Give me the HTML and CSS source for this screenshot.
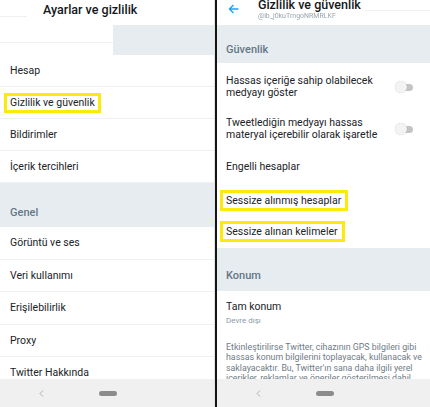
FILE: index.html
```html
<!DOCTYPE html>
<html lang="tr">
<head>
	<meta charset="UTF-8">
	<title>Ayarlar ve gizlilik</title>
	<link rel="stylesheet" href="styles.css">
</head>
<body>
	<div class="screen">
		<!-- sol ekran -->
		<section class="phone phone-left">
			<div class="content">
				<div class="top">
					<span class="ghost-line"></span>
					<h1 class="title">Ayarlar ve gizlilik</h1>
				</div>
				<div class="band">
					<div class="band-white"></div>
					<div class="band-grey"></div>
				</div>
				<ul class="list">
					<li class="row">Hesap</li>
					<li class="row"><span class="mark">Gizlilik ve güvenlik</span></li>
					<li class="row">Bildirimler</li>
					<li class="row">İçerik tercihleri</li>
				</ul>
				<div class="section section-genel">Genel</div>
				<ul class="list list-genel">
					<li class="row">Görüntü ve ses</li>
					<li class="row">Veri kullanımı</li>
					<li class="row">Erişilebilirlik</li>
					<li class="row">Proxy</li>
					<li class="row">Twitter Hakkında</li>
				</ul>
			</div>
			<div class="navbar">
				<svg class="nav-back" width="5" height="7" viewBox="0 0 5 7"><path d="M4 0.5 L1 3.5 L4 6.5" fill="none" stroke="#a8a8a8" stroke-width="0.9"/></svg>
				<span class="nav-pill"></span>
			</div>
		</section>

		<div class="divider"></div>

		<!-- sag ekran -->
		<section class="phone phone-right">
			<div class="content">
				<div class="rtop">
					<svg class="back" width="11" height="10" viewBox="0 0 11 10"><path d="M10.5 5 H1.5 M5.5 1 L1.5 5 L5.5 9" fill="none" stroke="#1da1f2" stroke-width="1.4"/></svg>
					<div class="rtitle">
						<h2 class="title">Gizlilik ve güvenlik</h2>
						<div class="handle">@ib_j0kuTrngoNRMRLKF</div>
					</div>
					<span class="ghost-line ghost-right"></span>
				</div>
				<div class="section section-guvenlik">Güvenlik</div>
				<div class="setting setting-1">
					<span>Hassas içeriğe sahip olabilecek<br>medyayı göster</span>
					<span class="toggle"><span class="track"></span><span class="thumb"></span></span>
				</div>
				<div class="setting setting-2">
					<span>Tweetlediğin medyayı hassas<br>materyal içerebilir olarak işaretle</span>
					<span class="toggle"><span class="track"></span><span class="thumb"></span></span>
				</div>
				<div class="setting setting-3">Engelli hesaplar</div>
				<div class="setting setting-4"><span class="mark">Sessize alınmış hesaplar</span></div>
				<div class="setting setting-5"><span class="mark">Sessize alınan kelimeler</span></div>
				<div class="section section-konum">Konum</div>
				<div class="location">
					<div class="loc-title">Tam konum</div>
					<div class="loc-sub">Devre dışı</div>
				</div>
				<p class="desc">Etkinleştirilirse Twitter, cihazının GPS bilgileri gibi<br>hassas konum bilgilerini toplayacak, kullanacak ve<br>saklayacaktır. Bu, Twitter'ın sana daha ilgili yerel<br>içerikler, reklamlar ve öneriler gösterilmesi dahil</p>
			</div>
			<div class="navbar">
				<svg class="nav-back" width="5" height="7" viewBox="0 0 5 7"><path d="M4 0.5 L1 3.5 L4 6.5" fill="none" stroke="#a8a8a8" stroke-width="0.9"/></svg>
				<span class="nav-pill"></span>
			</div>
		</section>
	</div>
</body>
</html>
```

FILE: styles.css
```css
*{padding: 0;margin: 0;}
*,*:after,*:before{box-sizing:border-box;}
html,body{height: 100%;width: 100%;background: #fff;}
body{font-family: Roboto, "Noto Sans", sans-serif;color: #202327;font-size: 10.5px;}
ul{list-style: none;}

.screen{display: flex;width: 430px;height: 407px;overflow: hidden;}
.phone{display: flex;flex-direction: column;height: 100%;background: #fff;}
.phone-left{width: 215px;flex: none;border-right: 1px solid #e2e2e2;}
.phone-right{flex: 1;min-width: 0;overflow: hidden;}
.divider{width: 2px;flex: none;background: #151515;}
.content{flex: 1;overflow: hidden;}

/* basliklar */
.top{display: flex;align-items: flex-start;height: 25px;}
.ghost-line{display: block;width: 27px;height: 1px;margin-top: 16px;background: #eef0f2;}
.title{font-size: 12.5px;font-weight: 500;line-height: 20px;color: #14171a;margin-left: 16px;}

.band{display: flex;height: 30px;}
.band-white{width: 113px;height: 18px;border-bottom: 1px solid #eef0f2;}
.band-grey{flex: 1;background: #e6ecf0;}

/* listeler */
.row{display: flex;align-items: center;height: 32px;padding-left: 10px;border-bottom: 1px solid #eef0f2;}
.list-genel .row{height: 32.5px;}

.section{display: flex;align-items: flex-end;background: #e6ecf0;color: #657786;font-size: 11px;font-weight: 500;line-height: 16px;}
.section-genel{height: 44px;padding: 0 0 6px 10px;}
.section-guvenlik{height: 38px;padding: 0 0 5px 9px;}
.section-konum{height: 43px;padding: 0 0 7px 9px;}

.mark{display: inline-block;margin-left: -6px;padding: 0 3px;line-height: 14px;border: 3px solid #fbea0a;background: #fff;}
.setting .mark{padding: 0 4px 0 3px;}

/* sag ekran */
.rtop{display: flex;align-items: flex-start;height: 25px;}
.back{margin: 4px 0 0 11px;}
.rtitle{margin-left: 19px;width: 108px;}
.rtitle .title{margin: -2px 0 0;line-height: 14px;white-space: nowrap;}
.handle{line-height: 8px;font-size: 7px;color: #9aa4ad;filter: blur(0.6px);white-space: nowrap;overflow: hidden;width: 88px;}
.ghost-right{width: 66px;margin: 10px 0 0 auto;}

.setting{display: flex;align-items: center;justify-content: space-between;padding: 0 17px 0 9px;line-height: 12px;}
.setting-1{height: 47px;}
.setting-2{height: 38px;}
.setting-3{height: 38px;}
.setting-4{height: 28px;}
.setting-5{height: 34px;}
.setting-4 .mark,.setting-5 .mark{line-height: 15px;}

.toggle{position: relative;width: 18px;height: 12px;flex: none;}
.track{position: absolute;right: 0;top: 3px;width: 12px;height: 7px;border-radius: 0 4px 4px 0;background: #c4c4c4;}
.thumb{position: absolute;left: 0;top: 0;width: 12px;height: 12px;border-radius: 50%;background: #f3f3f3;box-shadow: 0 0 1px rgba(0,0,0,.25);}

.location{padding: 9px 0 0 9px;}
.loc-title{line-height: 14px;}
.loc-sub{font-size: 8px;line-height: 11px;color: #8899a6;margin-top: 1px;}
.desc{padding: 16px 4px 0 9px;font-size: 8.8px;line-height: 10.3px;color: #6f7b85;white-space: nowrap;}

/* alt gezinme cubugu */
.navbar{display: flex;align-items: center;height: 28px;background: #f0f0f0;flex: none;}
.nav-back{margin-left: 39px;}
.nav-pill{width: 18px;height: 5px;margin-left: 55px;border-radius: 3px;background: #8c8c8c;}
```
